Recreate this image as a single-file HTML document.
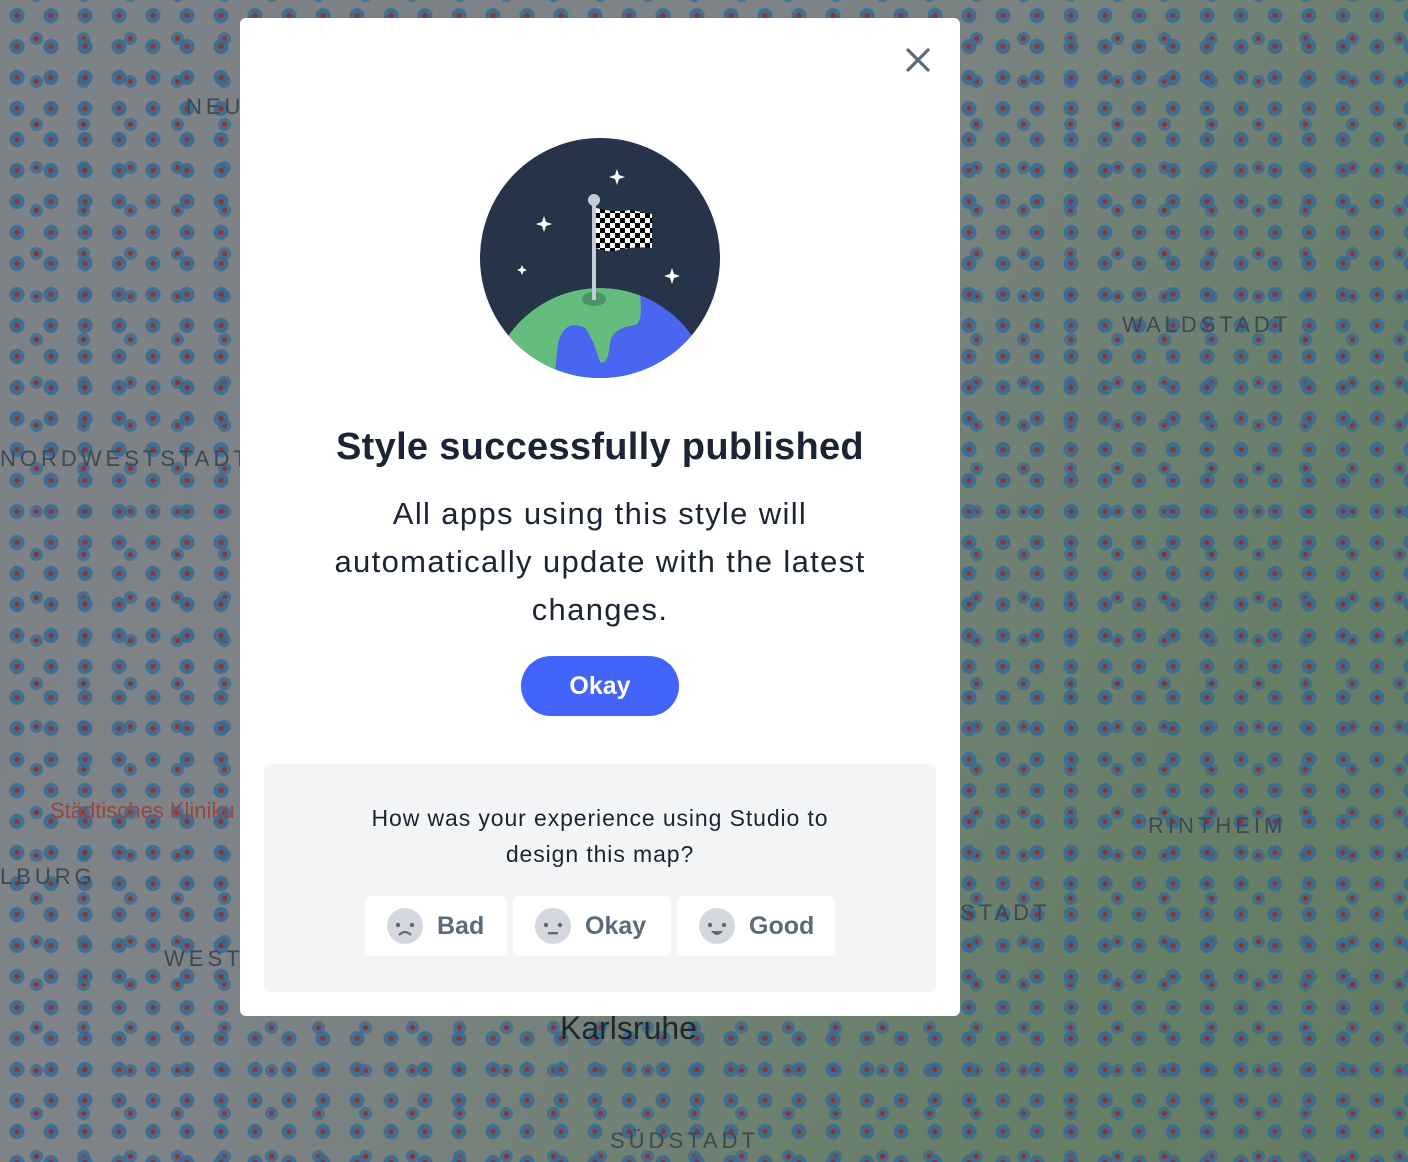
<!DOCTYPE html>
<html><head><meta charset="utf-8"><style>
html,body{margin:0;padding:0;width:1408px;height:1162px;overflow:hidden;font-family:"Liberation Sans","DejaVu Sans",sans-serif}
.map{position:absolute;inset:0;background:
 radial-gradient(circle at 50% 50%, rgba(150,40,40,.9) 0 2px, rgba(55,105,145,.85) 3px 7px, transparent 8px) 0 0/34px 31px,
 radial-gradient(circle at 50% 50%, rgba(150,40,40,.9) 0 2px, rgba(55,105,145,.75) 3px 6px, transparent 7px) 13px 17px/47px 43px,
 linear-gradient(120deg,#7c8286 0%,#7d8386 40%,#728176 60%,#667e66 80%,#637c62 100%);}
.lbl{position:absolute;color:#3e4852;letter-spacing:4px;font-size:22px}
.modal{position:absolute;left:240px;top:18px;width:720px;height:998px;background:#fff;border-radius:6px}
.close{position:absolute;left:904px;top:46px}
h1{position:absolute;top:426px;left:240px;width:720px;margin:0;text-align:center;font-size:38px;font-weight:bold;color:#1b2434;letter-spacing:.3px}
.msg{position:absolute;top:490px;left:240px;width:720px;text-align:center;font-size:31px;line-height:48px;color:#1b2434;letter-spacing:1.35px}
.btn{position:absolute;left:521px;top:656px;width:158px;height:60px;border-radius:30px;background:#4264fb;color:#fff;font-weight:bold;font-size:25px;text-align:center;line-height:60px}
.fb{position:absolute;left:264px;top:764px;width:672px;height:228px;background:#f4f5f6;border-radius:6px}
.q{position:absolute;top:800px;left:264px;width:672px;text-align:center;font-size:23px;line-height:36px;color:#1b2434;letter-spacing:.9px}
.o{position:absolute;top:896px;height:60px;background:#fff;border-radius:6px;font-weight:bold;font-size:25px;color:#5a6b7d;line-height:60px}
.o svg{position:absolute;left:22px;top:12px}
.o span{position:absolute;left:72px}
</style></head><body>
<div class="map"></div>
<div class="lbl" style="left:186px;top:94px">NEU</div>
<div class="lbl" style="left:0;top:446px">NORDWESTSTADT</div>
<div class="lbl" style="left:0;top:864px">LBURG</div>
<div class="lbl" style="left:164px;top:946px">WEST</div>
<div class="lbl" style="left:1122px;top:312px">WALDSTADT</div>
<div class="lbl" style="left:1148px;top:813px">RINTHEIM</div>
<div class="lbl" style="left:960px;top:900px">STADT</div>
<div class="lbl" style="left:610px;top:1128px">SÜDSTADT</div>
<div class="lbl" style="left:560px;top:1010px;font-size:32px;letter-spacing:0;color:#1f2730">Karlsruhe</div>
<div class="lbl" style="left:50px;top:798px;font-size:22px;letter-spacing:0;color:#9a4444">Städtisches Kliniku</div>
<div class="modal"></div>
<svg class="close" width="28" height="28" viewBox="0 0 28 28"><path d="M4 4L24 24M24 4L4 24" stroke="#5a6b7d" stroke-width="3.2" stroke-linecap="round"/></svg>
<svg style="position:absolute;left:480px;top:138px" width="240" height="240" viewBox="0 0 240 240">
<defs><clipPath id="c"><circle cx="120" cy="120" r="120"/></clipPath>
<clipPath id="p"><circle cx="120" cy="262" r="112"/></clipPath>
<pattern id="ch" width="10" height="10" patternUnits="userSpaceOnUse"><rect width="10" height="10" fill="#fff"/><rect width="5" height="5"/><rect x="5" y="5" width="5" height="5"/></pattern></defs>
<circle cx="120" cy="120" r="120" fill="#26344a"/>
<g clip-path="url(#c)"><g clip-path="url(#p)">
<circle cx="120" cy="262" r="112" fill="#63bd7c"/>
<path d="M158 140 Q165 185 155 187 Q132 190 130 205 Q128 228 120 224 Q113 200 105 190 Q85 180 78 205 L74 245 L260 245 L260 140Z" fill="#4a66f0"/>
</g></g>
<ellipse cx="114" cy="161" rx="12" ry="7" fill="#4a9468"/>
<rect x="112" y="65" width="4" height="97" fill="#c3ccd8"/>
<circle cx="114" cy="62" r="6" fill="#c3ccd8"/>
<path d="M116 70 Q135 75 150 72 L172 76 L172 110 Q150 108 135 113 Q125 114 116 110Z" fill="url(#ch)"/>
<g fill="#fff">
<path d="M137 31l2 6 6 2-6 2-2 6-2-6-6-2 6-2z"/>
<path d="M64 78l2 6 6 2-6 2-2 6-2-6-6-2 6-2z"/>
<path d="M192 130l2 6 6 2-6 2-2 6-2-6-6-2 6-2z"/>
<path d="M42 127l1.5 3.5 3.5 1.5-3.5 1.5-1.5 3.5-1.5-3.5-3.5-1.5 3.5-1.5z"/>
</g></svg>
<h1>Style successfully published</h1>
<div class="msg">All apps using this style will<br>automatically update with the latest<br>changes.</div>
<div class="btn">Okay</div>
<div class="fb"></div>
<div class="q">How was your experience using Studio to<br>design this map?</div>
<div class="o" style="left:365px;width:142px"><svg width="36" height="36" viewBox="0 0 36 36"><circle cx="18" cy="18" r="18" fill="#d4d8de"/><circle cx="11" cy="17" r="2.2" fill="#5a6b7d"/><circle cx="25" cy="17" r="2.2" fill="#5a6b7d"/><path d="M12 27Q18 21 24 27" stroke="#5a6b7d" stroke-width="2.2" fill="none"/></svg><span>Bad</span></div>
<div class="o" style="left:513px;width:158px"><svg width="36" height="36" viewBox="0 0 36 36"><circle cx="18" cy="18" r="18" fill="#d4d8de"/><circle cx="11" cy="17" r="2.2" fill="#5a6b7d"/><circle cx="25" cy="17" r="2.2" fill="#5a6b7d"/><rect x="13" y="24" width="10" height="2.4" fill="#5a6b7d"/></svg><span>Okay</span></div>
<div class="o" style="left:677px;width:158px"><svg width="36" height="36" viewBox="0 0 36 36"><circle cx="18" cy="18" r="18" fill="#d4d8de"/><circle cx="11" cy="17" r="2.2" fill="#5a6b7d"/><circle cx="25" cy="17" r="2.2" fill="#5a6b7d"/><path d="M12 23Q18 31 24 23Z" fill="#5a6b7d"/></svg><span>Good</span></div>
</body></html>
